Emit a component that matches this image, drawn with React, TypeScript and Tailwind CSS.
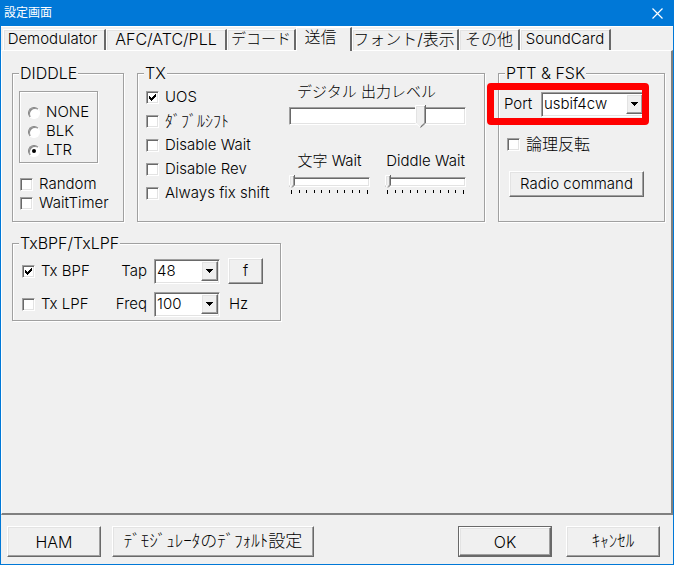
import { useState, type ReactNode } from 'react';

const raised =
  'border border-t-white border-l-white border-r-[#696969] border-b-[#696969] bg-[#f0f0f0] shadow-[inset_-1px_-1px_0_#a0a0a0,inset_1px_1px_0_#e3e3e3]';
const sunken =
  'border border-t-[#a0a0a0] border-l-[#a0a0a0] border-r-white border-b-white bg-white shadow-[inset_1px_1px_0_#696969,inset_-1px_-1px_0_#e3e3e3]';

function Group({ title, className = '', children }: { title: string; className?: string; children: ReactNode }) {
  return (
    <fieldset className={`min-w-0 border border-[#a0a0a0] shadow-[1px_1px_0_#fff,inset_1px_1px_0_#fff] ${className}`}>
      <legend className="ml-[6px] bg-[#f0f0f0] px-px text-[16px] leading-[18px]">{title}</legend>
      {children}
    </fieldset>
  );
}

function Check({ label, checked = false, className = '' }: { label: string; checked?: boolean; className?: string }) {
  const [on, setOn] = useState(checked);
  return (
    <label className={`flex items-center gap-[6px] whitespace-nowrap ${className}`}>
      <span className="grid shrink-0 place-items-center">
        <input
          type="checkbox"
          checked={on}
          onChange={() => setOn(!on)}
          className={`col-start-1 row-start-1 size-[13px] appearance-none ${sunken}`}
        />
        {on && (
          <svg viewBox="0 0 7 7" className="pointer-events-none col-start-1 row-start-1 size-[7px]" shapeRendering="crispEdges">
            <path d="M0 2h1v1h1v1h1v-1h1v-1h1v-1h1v-1h1v3h-1v1h-1v1h-1v1h-1v1h-1v-1h-1v-1h-1z" />
          </svg>
        )}
      </span>
      <span>{label}</span>
    </label>
  );
}

function Radio({ label, checked, onChange }: { label: string; checked: boolean; onChange: () => void }) {
  return (
    <label className="flex h-[19px] items-center gap-[6px]">
      <span className="grid shrink-0 place-items-center">
        <input
          type="radio"
          name="diddle"
          checked={checked}
          onChange={onChange}
          className="col-start-1 row-start-1 size-[12px] appearance-none rounded-full border border-t-[#808080] border-r-white border-b-white border-l-[#808080] bg-white shadow-[inset_1px_1px_0_#8a8a8a]"
        />
        {checked && <span className="pointer-events-none col-start-1 row-start-1 size-[4px] rounded-full bg-black" />}
      </span>
      <span>{label}</span>
    </label>
  );
}

function Combo({ id, value, className = '' }: { id: string; value: string; className?: string }) {
  return (
    <span className={`grid h-[24px] items-center ${className}`}>
      <select id={id} className={`col-start-1 row-start-1 h-full w-full appearance-none pr-[18px] pl-[2px] ${sunken}`}>
        <option>{value}</option>
      </select>
      <span
        className={`pointer-events-none col-start-1 row-start-1 mr-[2px] grid h-[20px] w-[17px] place-items-center justify-self-end ${raised}`}
      >
        <svg viewBox="0 0 7 4" className="h-[4px] w-[7px]" shapeRendering="crispEdges">
          <path d="M0 0h7v1h-1v1h-1v1h-1v1h-1v-1h-1v-1h-1v-1h-1z" />
        </svg>
      </span>
    </span>
  );
}

function PushButton({ children, className = '' }: { children: ReactNode; className?: string }) {
  return (
    <button type="button" className={`whitespace-nowrap ${raised} ${className}`}>
      {children}
    </button>
  );
}

function Thumb({ w, h, at }: { w: number; h: number; at: number }) {
  const m = w / 2;
  const s = Math.round(h - m);
  return (
    <svg
      viewBox={`0 0 ${w} ${h}`}
      width={w}
      height={h}
      className="pointer-events-none absolute -top-[2px]"
      style={{ left: `${Math.round((177 * at) / 100 - (w * at) / 100)}px` }}
    >
      <path d={`M0 0H${w}V${s}L${m} ${h}L0 ${s}Z`} fill="#f0f0f0" />
      <path d={`M.5 ${s}V.5H${w - 1}`} fill="none" stroke="#fff" />
      <path d={`M1.5 ${s}V1.5H${w - 2}`} fill="none" stroke="#e3e3e3" />
      <path d={`M.5 ${s}L${m} ${h - 0.5}`} fill="none" stroke="#fff" />
      <path d={`M${w - 1.5} 1V${s}L${m} ${h - 1.5}`} fill="none" stroke="#a0a0a0" />
      <path d={`M${w - 0.5} 0V${s}L${m} ${h - 0.5}`} fill="none" stroke="#696969" />
    </svg>
  );
}

const hiddenThumb =
  '[&::-webkit-slider-thumb]:h-full [&::-webkit-slider-thumb]:w-[11px] [&::-webkit-slider-thumb]:appearance-none';

function WaitSlider({ id, label }: { id: string; label: string }) {
  const [v, setV] = useState(0);
  return (
    <div className="flex w-[81px] flex-col">
      <label htmlFor={id} className="text-center leading-[20px] whitespace-nowrap">
        {label}
      </label>
      <div className="relative mt-[6px] h-[10px]">
        <input
          id={id}
          type="range"
          value={v}
          onChange={(e) => setV(Number(e.target.value))}
          className={`block h-full w-full appearance-none ${sunken} ${hiddenThumb}`}
        />
        <Thumb w={6} h={13} at={v * 0.43} />
      </div>
      <div className="mx-[2px] mt-[3px] flex h-[4px] justify-between">
        {Array.from({ length: 11 }, (_, i) => (
          <i key={i} className={`w-px bg-black ${i % 10 ? 'h-[3px]' : 'h-[4px]'}`} />
        ))}
      </div>
    </div>
  );
}

const tabs = [
  { name: 'Demodulator', w: 'w-[103px]', size: 'pr-[3px]' },
  { name: 'AFC/ATC/PLL', w: 'w-[121px]', size: 'text-[16px]' },
  { name: 'デコード', w: 'w-[69px]', size: '' },
  { name: '送信', w: 'w-[56px]', size: 'text-[16px] pr-[6px]' },
  { name: 'フォント/表示', w: 'w-[107px]', size: 'text-[16px] pr-[2px]' },
  { name: 'その他', w: 'w-[61px]', size: 'text-[16px]' },
  { name: 'SoundCard', w: 'w-[91px]', size: '' },
];

export default function App() {
  const [tab, setTab] = useState('送信');
  const [mode, setMode] = useState('LTR');
  const [level, setLevel] = useState(76);
  return (
    <main className="flex min-h-screen flex-col border border-t-0 border-[#0078d7] bg-[#f0f0f0] font-['Inter','Noto_Sans_CJK_JP',sans-serif] text-[15px] font-light text-black">
      <header className="flex h-[26px] items-center justify-between bg-[#0078d7] pr-[10px] pl-[3px] text-white">
        <h1 className="text-[12px] font-normal">設定画面</h1>
        <button type="button" aria-label="閉じる">
          <svg viewBox="0 0 11 11" className="size-[11px]" stroke="#fff" strokeWidth="1.2">
            <path d="M.5.5l10 10M10.5.5l-10 10" />
          </svg>
        </button>
      </header>

      <nav role="tablist" className="flex h-[24px] items-end border-t border-white pl-[2px]">
        {tabs.map((t) => (
          <button
            key={t.name}
            type="button"
            role="tab"
            aria-selected={t.name === tab}
            onClick={() => setTab(t.name)}
            className={`border-t border-l border-white leading-[18px] whitespace-nowrap ${t.w} ${t.size} ${
              t.name === tab
                ? 'relative -mb-px h-[24px] border-r-2 border-r-[#696969] bg-[#f0f0f0] pb-[6px]'
                : 'h-[21px] border-r-2 border-r-[#696969] pb-[2px] shadow-[inset_1px_1px_0_#e3e3e3]'
            }`}
          >
            {t.name}
          </button>
        ))}
      </nav>

      <section
        role="tabpanel"
        className="flex-1 border-t border-r-2 border-b-2 border-l border-t-white border-r-[#808080] border-b-[#808080] border-l-white pt-[13px] pr-[6px] pl-[10px]"
      >
        <div className="flex h-[158px] items-stretch gap-[13px]">
          <Group title="DIDDLE" className="w-[112px] shrink-0">
            <div className="mt-[9px] ml-[6px] w-[79px] border border-[#a0a0a0] pt-[11px] pb-[2px] pl-[8px] shadow-[1px_1px_0_#fff,inset_1px_1px_0_#fff]">
              {['NONE', 'BLK', 'LTR'].map((m) => (
                <Radio key={m} label={m} checked={m === mode} onChange={() => setMode(m)} />
              ))}
            </div>
            <div className="mt-[12px] ml-[7px] flex flex-col">
              <Check label="Random" className="h-[19px]" />
              <Check label="WaitTimer" className="h-[19px]" />
            </div>
          </Group>

          <Group title="TX" className="flex-1">
            <div className="flex justify-between pt-px pr-[18px] pl-[8px]">
              <div className="flex flex-col pt-[2px]">
                <Check label="UOS" checked className="h-[24px]" />
                <Check label="ﾀﾞﾌﾞﾙｼﾌﾄ" className="h-[24px] text-[16px]" />
                <Check label="Disable Wait" className="h-[24px]" />
                <Check label="Disable Rev" className="h-[24px]" />
                <Check label="Always fix shift" className="h-[24px]" />
              </div>
              <div className="flex w-[177px] flex-col">
                <label htmlFor="level" className="pl-[8px] leading-[18px] whitespace-nowrap">
                  デジタル 出力レベル
                </label>
                <div className="relative mt-[6px] h-[18px]">
                  <input
                    id="level"
                    type="range"
                    value={level}
                    onChange={(e) => setLevel(Number(e.target.value))}
                    className={`block h-full w-full appearance-none ${sunken} ${hiddenThumb}`}
                  />
                  <Thumb w={11} h={23} at={level} />
                </div>
                <div className="mt-[26px] flex justify-between">
                  <WaitSlider id="char-wait" label="文字 Wait" />
                  <WaitSlider id="diddle-wait" label="Diddle Wait" />
                </div>
              </div>
            </div>
          </Group>

          <Group title="PTT & FSK" className="w-[167px] shrink-0">
            <div className="relative mt-[10px] flex items-center justify-between pr-[19px] pl-[5px]">
              <label htmlFor="port">Port</label>
              <Combo id="port" value="usbif4cw" className="w-[104px]" />
              <span className="pointer-events-none absolute -top-[9px] right-[15px] -left-[12px] h-[42px] rounded-[4px] border-7 border-[#ff0000]" />
            </div>
            <Check label="論理反転" className="mt-[16px] ml-[8px] h-[24px] text-[16px]" />
            <PushButton className="mt-[15px] ml-[10px] h-[26px] w-[135px]">Radio command</PushButton>
          </Group>
        </div>

        <Group title="TxBPF/TxLPF" className="mt-[12px] h-[87px] w-[269px]">
          <div className="grid grid-cols-[auto_1fr_66px_43px] items-center gap-y-[8px] pt-[6px] pr-[17px] pl-[9px]">
            <Check label="Tx BPF" checked />
            <label htmlFor="tap" className="pr-[7px] text-right">
              Tap
            </label>
            <Combo id="tap" value="48" />
            <PushButton className="ml-[8px] h-[26px] w-[35px]">f</PushButton>
            <Check label="Tx LPF" />
            <label htmlFor="freq" className="pr-[7px] text-right">
              Freq
            </label>
            <Combo id="freq" value="100" />
            <span className="pl-[9px]">Hz</span>
          </div>
        </Group>
      </section>

      <footer className="flex items-center pt-[11px] pr-[13px] pb-[7px] pl-[6px]">
        <PushButton className="h-[31px] w-[94px] text-[16px]">HAM</PushButton>
        <PushButton className="ml-[11px] h-[31px] w-[202px] text-[17px]">ﾃﾞﾓｼﾞｭﾚｰﾀのﾃﾞﾌｫﾙﾄ設定</PushButton>
        <span className="ml-auto flex border border-[#696969]">
          <PushButton className="h-[29px] w-[92px] text-[16px]">OK</PushButton>
        </span>
        <PushButton className="ml-[14px] h-[31px] w-[94px] text-[17px]">ｷｬﾝｾﾙ</PushButton>
      </footer>
    </main>
  );
}
